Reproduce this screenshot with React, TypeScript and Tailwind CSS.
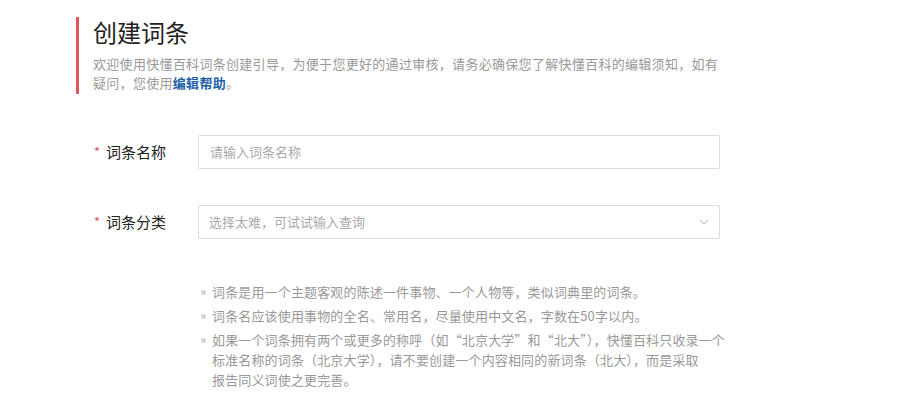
import React from 'react'

const tips: React.ReactNode[] = [
    '词条是用一个主题客观的陈述一件事物、一个人物等，类似词典里的词条。',
    '词条名应该使用事物的全名、常用名，尽量使用中文名，字数在50字以内。',
    <>如果一个词条拥有两个或更多的称呼（如“北京大学”和“北大”），快懂百科只收录一个<br />标准名称的词条（北京大学），请不要创建一个内容相同的新词条（北大），而是采取<br />报告同义词使之更完善。</>,
]

const App = () => {
    return (
        <div className='w-[920px] h-[409px] bg-white overflow-hidden font-["Noto_Sans_CJK_SC",sans-serif]'>
            <div className='ml-[76px] mt-[17px] w-[660px] border-l-[3px] border-[#e0575b] pl-[14px] pb-[2px]'>
                <h1 className='text-[24px] leading-[28px] text-[#222] pt-[1px]'>创建词条</h1>
                <p className='mt-[8px] text-[13px] leading-[19px] text-[#999] w-[640px] tracking-[0.3px]'>
                    欢迎使用快懂百科词条创建引导，为便于您更好的通过审核，请务必确保您了解快懂百科的编辑须知，如有<br />疑问，您使用<span className='text-[#1e5fa8] font-bold'>编辑帮助</span>。
                </p>
            </div>

            <div className='ml-[94px] mt-[41px] w-[626px] flex flex-col gap-[36px]'>
                <div className='flex items-center'>
                    <label className='w-[104px] flex items-center text-[15px] text-[#222]'>
                        <span className='text-[#e0575b] text-[13px] mr-[6px]'>*</span>词条名称
                    </label>
                    <div className='flex-1 h-[34px] border border-[#dcdcdc] rounded-[2px] flex items-center px-[11px] text-[13px] text-[#aaa]'>
                        请输入词条名称
                    </div>
                </div>
                <div className='flex items-center'>
                    <label className='w-[104px] flex items-center text-[15px] text-[#222]'>
                        <span className='text-[#e0575b] text-[13px] mr-[6px]'>*</span>词条分类
                    </label>
                    <div className='flex-1 h-[34px] border border-[#dcdcdc] rounded-[2px] flex items-center justify-between pl-[10px] pr-[10px] text-[13px] text-[#aaa]'>
                        <span>选择太难，可试试输入查询</span>
                        <svg width="10" height="10" viewBox="0 0 10 10" fill="none" stroke="#bbb" strokeWidth="1">
                            <path d="M1.5 3.5 L5 7 L8.5 3.5" />
                        </svg>
                    </div>
                </div>
            </div>

            <ul className='ml-[200px] mt-[43px] w-[560px] flex flex-col gap-[4px] text-[13px] leading-[20px] text-[#999] tracking-[0.15px]'>
                {tips.map((t, i) => (
                    <li key={i} className='flex'>
                        <span className='w-[12px] shrink-0 flex pt-[8px] pl-[1px]'>
                            <span className='w-[5px] h-[5px] rounded-full bg-[#d4d4d4]'></span>
                        </span>
                        <span>{t}</span>
                    </li>
                ))}
            </ul>
        </div>
    )
}

export default App
